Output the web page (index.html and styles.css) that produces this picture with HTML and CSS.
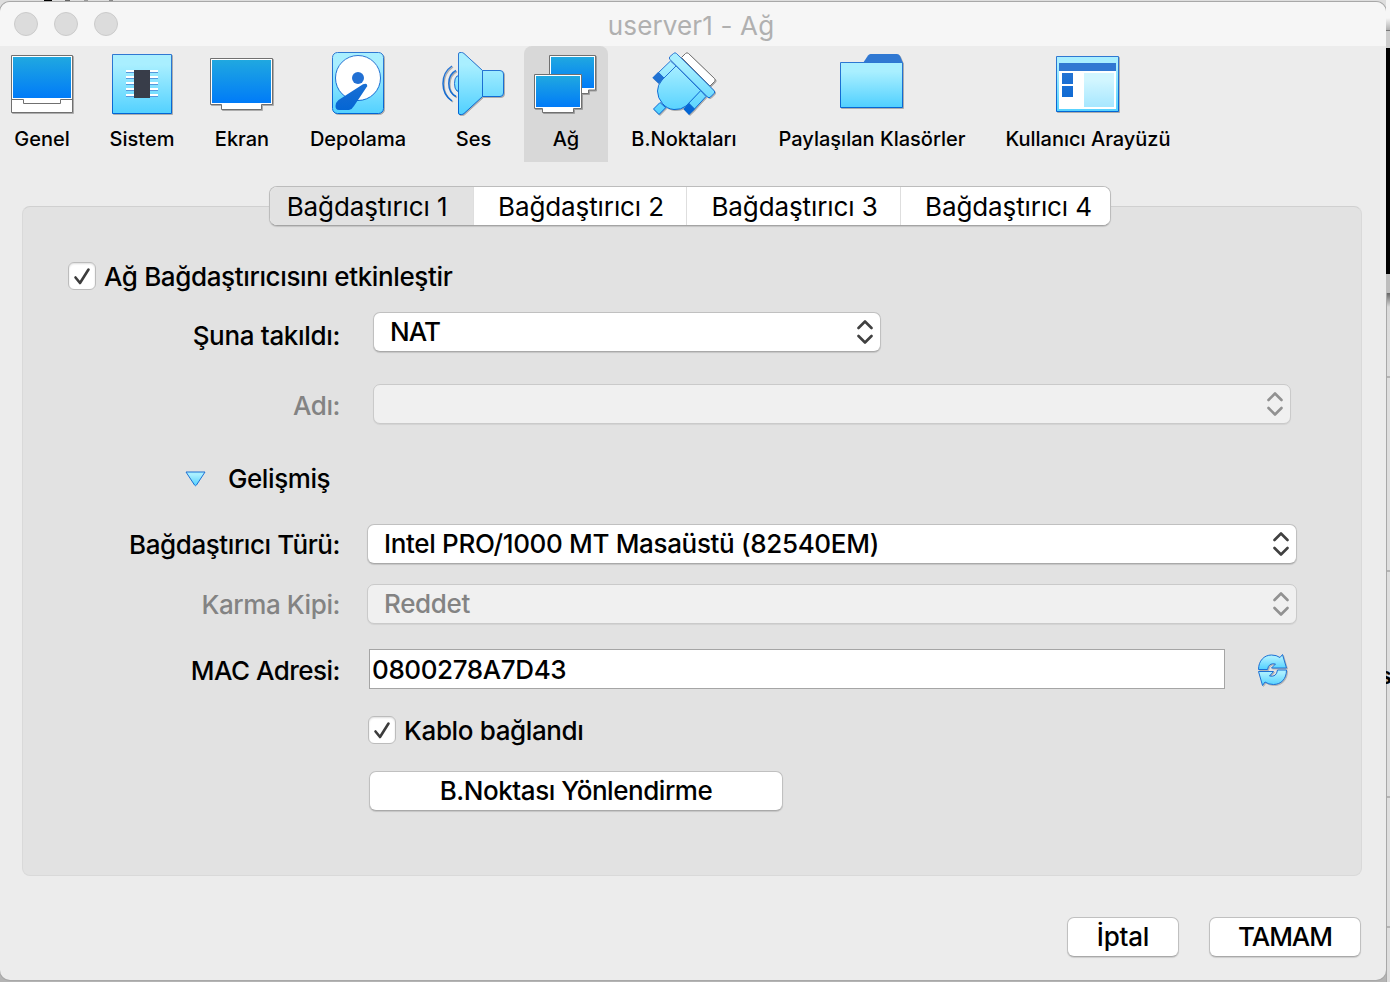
FILE: index.html
```html
<!DOCTYPE html>
<html lang="tr">
<head>
<meta charset="utf-8">
<title>userver1 - Ağ</title>
<link rel="stylesheet" href="styles.css">
</head>
<body>
<svg class="defs" width="0" height="0" aria-hidden="true">
  <defs>
    <linearGradient id="screen" x1="0" y1="0" x2="0" y2="1"><stop offset="0" stop-color="#20a8e0"/><stop offset="1" stop-color="#007bf8"/></linearGradient>
    <linearGradient id="sky" x1="0" y1="0" x2="0" y2="1"><stop offset="0.2" stop-color="#a9efff"/><stop offset="1" stop-color="#50d0ff"/></linearGradient>
    <linearGradient id="skyAll" gradientUnits="userSpaceOnUse" x1="0" y1="0" x2="0" y2="63"><stop offset="0.2" stop-color="#a9efff"/><stop offset="1" stop-color="#50d0ff"/></linearGradient>
    <linearGradient id="edge" gradientUnits="userSpaceOnUse" x1="0" y1="0" x2="0" y2="63"><stop offset="0.1" stop-color="#3078d2"/><stop offset="1" stop-color="#0064d4"/></linearGradient>
    <linearGradient id="pale" x1="0" y1="0" x2="0" y2="1"><stop offset="0.2" stop-color="#d2f6ff"/><stop offset="1" stop-color="#a7e7ff"/></linearGradient>
  </defs>
</svg>
<div class="desktop">
  <main class="window">
    <header class="titlebar">
      <div class="lights"><i></i><i></i><i></i></div>
      <h1 class="title">userver1 - Ağ</h1>
    </header>

    <nav class="toolbar">
      <div class="tool">
        <svg viewBox="0 0 64 64"><path d="M1.5 3.5h61v57h-61z" fill="#fff" stroke="#707070"/><path d="M3 5h58v41H3z" fill="url(#screen)"/><path d="M1.5 47.5h12v4h37v-4h12" fill="none" stroke="#707070"/></svg>
        <span>Genel</span>
      </div>
      <div class="tool">
        <svg viewBox="0 0 64 64"><path d="M2.5 2.5h59v59h-59z" fill="url(#skyAll)" stroke="url(#edge)"/><path d="M16 18h32v2H16zM16 24h32v2H16zM16 30h32v2H16zM16 36h32v2H16zM16 42h32v2H16z" fill="#fff"/><path d="M16 20h32v1H16zM16 26h32v1H16zM16 32h32v1H16zM16 38h32v1H16zM16 44h32v1H16z" fill="#5798dc"/><path d="M24 18h16v28H24z" fill="#383d49"/></svg>
        <span>Sistem</span>
      </div>
      <div class="tool">
        <svg viewBox="0 0 64 64"><path d="M.5 6.5h62v46h-11v5h-40v-5H.5z" fill="#fff" stroke="#707070"/><path d="M2 8h59v43H2z" fill="url(#screen)"/></svg>
        <span>Ekran</span>
      </div>
      <div class="tool">
        <svg viewBox="0 0 64 64"><rect x="6.5" y=".5" width="51" height="61" rx="5" fill="url(#skyAll)" stroke="url(#edge)"/><circle cx="32" cy="26" r="22.5" fill="#fff" stroke="url(#edge)"/><circle cx="32" cy="26" r="6" fill="#2270d3"/><path d="M37 32.2Q40 31 41 32.5T40 36L28 54q-2 3.5-5 4H13q-3.500 0-3.500-4 0-3.500 3-6z" fill="url(#edge)"/></svg>
        <span>Depolama</span>
      </div>
      <div class="tool tool-sound">
        <svg viewBox="0 0 64 64"><g fill="url(#skyAll)" stroke="url(#edge)"><path d="M16.500 24h-1.500q-2.500 2-2.500 7.500t2.500 7.500h1.500z"/><path d="M16.500 2q0-1.500 1.500-1.500h1.500q1.500 0 2.500 1L40.500 18.500v26L22 61.500q-1 1-2.500 1H18q-1.500 0-1.500-1.500z"/><path d="M40.500 18.500h17.500q3.500 0 3.500 3.500v19q0 3.500-3.500 3.500h-17.500z"/></g><path d="M10 14C4 18 1 24 1 31.500S4 45 10 49M14 18.500C9 21 6.800 26 6.800 31.500S9 42 14 44.500" fill="none" stroke="url(#edge)" stroke-width="1.500"/></svg>
        <span>Ses</span>
      </div>
      <div class="tool tool-active">
        <svg viewBox="0 0 64 64"><path d="M15.500 3.500h46v34.500h-7v3.500h-31v-3.500h-8z" fill="#fff" stroke="#707070"/><path d="M17 5h43v31H17z" fill="url(#screen)"/><path d="M.5 22.500h47v34h-8v4h-31v-4h-8z" fill="#fff" stroke="#707070"/><path d="M2 24h44v31H2z" fill="url(#screen)"/></svg>
        <span>Ağ</span>
      </div>
      <div class="tool">
        <svg viewBox="0 0 64 64"><path d="M33.500 1.500q1.500-1.500 3 0l26 25q1.500 1.500 0 3L58 34 29.500 5.500z" fill="#fff" stroke="#707070"/><g fill="url(#skyAll)" stroke="url(#edge)" stroke-linejoin="round"><path d="M8 50.500l5.700 5.200L7 62.500 1.500 57z"/><path d="M18.500 9L6.500 20.500l6 6L24 14z"/><path d="M54 44.500L42.500 57l-6-6 12-12.500z"/><path d="M24 14L10 28Q5.500 33 5.500 39 5.500 46 10.500 51.500 15 57 22 57.500 29 58 34 54L48.700 38.700z"/><path d="M21.500 1.500q1.500-1.500 3 0l37.500 37q1.500 1.500 0 3L58.500 45q-1.500 1.500-3 0L18 7.500Q16.500 6 18 4.500z"/></g><path d="M6.300 19.700l6 6.200-5.600 5.800L.3 25.700zM37 51.300l6 6-6 5.700-5.700-6z" fill="url(#edge)"/></svg>
        <span>B.Noktaları</span>
      </div>
      <div class="tool">
        <svg viewBox="0 0 64 64"><path d="M23 11l5-7.500Q29 2 30.500 2h26.500q2 0 3 2l3 7z" fill="#3078d2"/><path d="M.5 10.500h62v45H.5z" fill="url(#sky)" stroke="url(#edge)"/></svg>
        <span>Paylaşılan Klasörler</span>
      </div>
      <div class="tool">
        <svg viewBox="0 0 64 64"><path d="M.5 4.500h62v55H.5z" fill="url(#skyAll)" stroke="url(#edge)"/><path d="M3 19h57v38H3z" fill="#fff"/><path d="M3 11h57v8H3z" fill="#3078d2"/><path d="M6 21h11v11H6zM6 34h11v11H6z" fill="url(#edge)"/><path d="M28 21h30v34H28z" fill="url(#pale)"/></svg>
        <span>Kullanıcı Arayüzü</span>
      </div>
    </nav>

    <section class="panel">
      <div class="tabs">
        <button class="tab tab-active">Bağdaştırıcı 1</button>
        <button class="tab">Bağdaştırıcı 2</button>
        <button class="tab">Bağdaştırıcı 3</button>
        <button class="tab">Bağdaştırıcı 4</button>
      </div>

      <div class="row row-enable">
        <span class="check"><svg viewBox="0 0 28 28"><path d="M7.500 15.500l4.500 5.500 8.500-13.500"/></svg></span>
        <span class="text check-text">Ağ Bağdaştırıcısını etkinleştir</span>
      </div>
      <div class="row row-attached">
        <span class="label text">Şuna takıldı:</span>
        <div class="select select-short"><span class="nat">NAT</span><svg viewBox="0 0 16 26"><path d="M1.500 9L8 2.500 14.500 9M1.500 17L8 23.500 14.500 17"/></svg></div>
      </div>
      <div class="row row-name disabled">
        <span class="label text">Adı:</span>
        <div class="select select-mid"><span></span><svg viewBox="0 0 16 26"><path d="M1.500 9L8 2.500 14.500 9M1.500 17L8 23.500 14.500 17"/></svg></div>
      </div>
      <div class="row row-advanced">
        <svg class="triangle" viewBox="0 0 21 16"><path d="M1 1h19L11.500 14q-1 1.500-2 0z" fill="url(#sky)" stroke="#1c70d4"/></svg>
        <span class="text">Gelişmiş</span>
      </div>
      <div class="row row-type">
        <span class="label text">Bağdaştırıcı Türü:</span>
        <div class="select select-long"><span>Intel PRO/1000 MT Masaüstü (82540EM)</span><svg viewBox="0 0 16 26"><path d="M1.500 9L8 2.500 14.500 9M1.500 17L8 23.500 14.500 17"/></svg></div>
      </div>
      <div class="row row-promisc disabled">
        <span class="label text">Karma Kipi:</span>
        <div class="select select-long"><span>Reddet</span><svg viewBox="0 0 16 26"><path d="M1.500 9L8 2.500 14.500 9M1.500 17L8 23.500 14.500 17"/></svg></div>
      </div>
      <div class="row row-mac">
        <span class="label text">MAC Adresi:</span>
        <div class="field">0800278A7D43</div>
        <svg class="refresh" viewBox="0 0 32 34"><g fill="url(#sky)" stroke="#1c70d4" stroke-linejoin="round"><path d="M1.500 16.500C1.500 8 7 2 14.500 2q5 0 8.500 2.500l2.500-3L29.500 15H14.500l4-4q-7-1.500-8 5.500z"/><path d="M29.500 17C29.500 26 24 31.500 16.500 31.500q-5 0-8.500-2.500l-2.500 3.500L1.500 18.500h15l-4 4.500q7 1.500 8-6z"/></g></svg>
      </div>
      <div class="row row-cable">
        <span class="check"><svg viewBox="0 0 28 28"><path d="M7.500 15.500l4.500 5.500 8.500-13.500"/></svg></span>
        <span class="text check-text">Kablo bağlandı</span>
      </div>
      <div class="row row-forward">
        <button class="button forward">B.Noktası Yönlendirme</button>
      </div>
    </section>

    <footer class="actions">
      <button class="button cancel">İptal</button>
      <button class="button ok">TAMAM</button>
    </footer>
  </main>
  <aside class="backdrop">
    <div class="bd-top"></div>
    <div class="bd-bar"></div>
    <div class="bd-black"></div>
    <div class="bd-bar2"></div>
    <div class="bd-page"><span>s</span></div>
  </aside>
</div>
</body>
</html>
```
FILE: styles.css
```css
* { box-sizing: border-box; }
body {
  margin: 0;
  width: 1390px;
  height: 982px;
  overflow: hidden;
  background:
    linear-gradient(90deg, transparent 44px, #000 44px 52px, transparent 52px 65px, #666 65px 70px, transparent 70px 84px, #999 84px 88px, transparent 88px 109px, #888 109px 113px, transparent 113px) 0 0 / 1390px 1px no-repeat,
    linear-gradient(#dedede 0 900px, #b4b4b4 980px);
  font-family: Inter, "Liberation Sans", sans-serif;
  font-size: 26px;
  color: #000;
}
.defs { display: block; }
.desktop { display: flex; height: 982px; padding-top: 2px; }
.window {
  width: 1386px;
  height: 978px;
  background: #ececec;
  border-radius: 10px;
  box-shadow: 0 0 0 1px #a8a8a8;
  overflow: hidden;
}
.titlebar {
  height: 44px;
  background: #f6f6f6;
  display: grid;
  grid-template-columns: 130px 1122px 134px;
  align-items: center;
}
.lights { display: flex; gap: 16px; padding-left: 14px; }
.lights i {
  width: 24px;
  height: 24px;
  border-radius: 50%;
  background: #dcdcdc;
  border: 1px solid #cbcbcb;
}
.title {
  margin: 3px 0 0;
  text-align: center;
  font-size: 26px;
  line-height: 32px;
  font-weight: 400;
  letter-spacing: 0.15px;
  color: #b0b0b0;
}
.toolbar {
  height: 116px;
  display: grid;
  grid-template-columns: 84px 116px 84px 148px 92px 84px 152px 224px 208px;
}
.tool {
  padding-top: 6px;
  display: flex;
  flex-direction: column;
  align-items: center;
  gap: 10px;
  font-size: 20px;
  line-height: 26px;
  font-weight: 500;
  white-space: nowrap;
}
.tool svg { width: 64px; height: 64px; filter: drop-shadow(1px 1px 0 #0004); }
.tool-sound { padding-right: 9px; }
.tool-active { background: #d8d8d8; border-radius: 8px 8px 0 0; }
.panel {
  width: 1340px;
  height: 670px;
  margin: 44px 0 0 22px;
  border: 1px solid #d9d9d9;
  border-top-color: #d0d0d0;
  border-radius: 8px;
  background: #e2e2e2;
}
.tabs {
  width: 842px;
  height: 40px;
  margin: -21px 0 0 246px;
  display: grid;
  grid-template-columns: 204px 213px 214px 209px;
  border: 1px solid #bcbcbc;
  border-bottom-color: #a4a4a4;
  border-radius: 8px;
  overflow: hidden;
  background: #fff;
  box-shadow: 0 1px 1px #0002;
}
.tab {
  border: 0;
  border-right: 1px solid #dedede;
  background: #fff;
  padding: 2px 0 0 2px;
  font: 400 26px/36px Inter, sans-serif;
  letter-spacing: -0.1px;
  color: #000;
  white-space: nowrap;
}
.tab:last-child { border-right: 0; padding-left: 6px; }
.tab-active { background: #e2e2e2; padding: 2px 9px 0 0; }
.row { height: 40px; display: flex; align-items: center; }
.text { font-weight: 450; line-height: 32px; letter-spacing: -0.42px; white-space: nowrap; }
.label { width: 317px; padding-top: 2px; text-align: right; }
.row-enable { margin-top: 30px; padding-left: 45px; gap: 8px; }
.row-attached { margin-top: 16px; gap: 33px; }
.row-attached .label { padding-top: 7px; letter-spacing: -0.33px; }
.row-name { margin-top: 32px; gap: 33px; }
.row-name .label { padding-top: 4px; }
.row-advanced { margin-top: 35px; padding-left: 162px; gap: 22px; }
.row-type { margin-top: 25px; gap: 27px; }
.row-promisc { margin-top: 20px; gap: 27px; }
.row-mac { margin-top: 25px; gap: 29px; }
.row-mac .label { padding-top: 4px; letter-spacing: -0.5px; }
.row-cable { margin-top: 21px; padding-left: 345px; gap: 8px; }
.check-text { padding-top: 2px; letter-spacing: -0.37px; }
.row-forward { margin-top: 21px; padding-left: 346px; }
.check {
  width: 28px;
  height: 28px;
  border: 1px solid #bcbcbc;
  border-radius: 6px;
  background: #fff;
  box-shadow: inset 0 1px 2px #0002;
}
.check svg { display: block; width: 28px; height: 28px; margin: -1px; }
.check path { fill: none; stroke: #3c3c3c; stroke-width: 2.6; stroke-linecap: round; stroke-linejoin: round; }
.select, .button {
  height: 40px;
  border: 1px solid #c0c0c0;
  border-bottom-color: #a9a9a9;
  border-radius: 7px;
  background: #fff;
  box-shadow: 0 1px 1px #0002;
}
.select {
  display: flex;
  align-items: center;
  justify-content: space-between;
  padding: 0 7.5px 0 16px;
  font-weight: 450;
  letter-spacing: -0.34px;
  white-space: nowrap;
}
.select span { padding-bottom: 2px; }
.select .nat { letter-spacing: -0.9px; }
.select svg { width: 16px; height: 26px; }
.select path { fill: none; stroke: #404040; stroke-width: 2.6; stroke-linecap: round; stroke-linejoin: round; }
.select-short { width: 508px; }
.select-mid { width: 918px; }
.select-long { width: 930px; }
.disabled { color: #838383; }
.disabled .select { background: #f0f0f0; border-color: #cacaca; box-shadow: 0 1px 1px #0001; }
.disabled .select path { stroke: #919191; }
.triangle { width: 21px; height: 16px; }
.field {
  width: 856px;
  height: 40px;
  padding: 0 2px;
  border: 1px solid #a5a5a5;
  background: #fff;
  line-height: 40px;
  font-weight: 450;
  letter-spacing: -0.4px;
}
.refresh { width: 32px; height: 34px; margin: 1px 0 0 3px; filter: drop-shadow(1px 1px 0 #0003); }
.button { padding: 0; font: 450 26px/38px Inter, sans-serif; letter-spacing: -0.45px; color: #000; }
.forward { width: 414px; }
.actions { margin-top: 41px; padding-left: 1067px; display: flex; gap: 30px; }
.cancel { width: 112px; letter-spacing: -0.2px; }
.ok { width: 152px; letter-spacing: -1px; }
.backdrop { width: 4px; margin-top: -2px; overflow: hidden; }
.bd-top { height: 30px; background: linear-gradient(#f6f6f6 0 60%, #b0b0b0); }
.bd-bar { height: 18px; background: #cdcdcd; border-top: 1px solid #777; }
.bd-black { height: 226px; background: #000; }
.bd-bar2 { height: 19px; background: #bdbdbd; }
.bd-page { height: 689px; padding-top: 371px; border-left: 1px solid #a8a8a8; background: linear-gradient(#666, #dadada 14px, #dedede 83px, #b4b4b4 83px 85px, #dedede 85px 277px, #b4b4b4 277px 279px, #dedede 279px 503px, #b4b4b4 503px 505px, #dedede 505px 633px, #b4b4b4 633px 635px, #dedede 635px); }
.bd-page span { display: block; margin-left: -9px; font: bold 24px/28px "Liberation Mono", monospace; }
```
